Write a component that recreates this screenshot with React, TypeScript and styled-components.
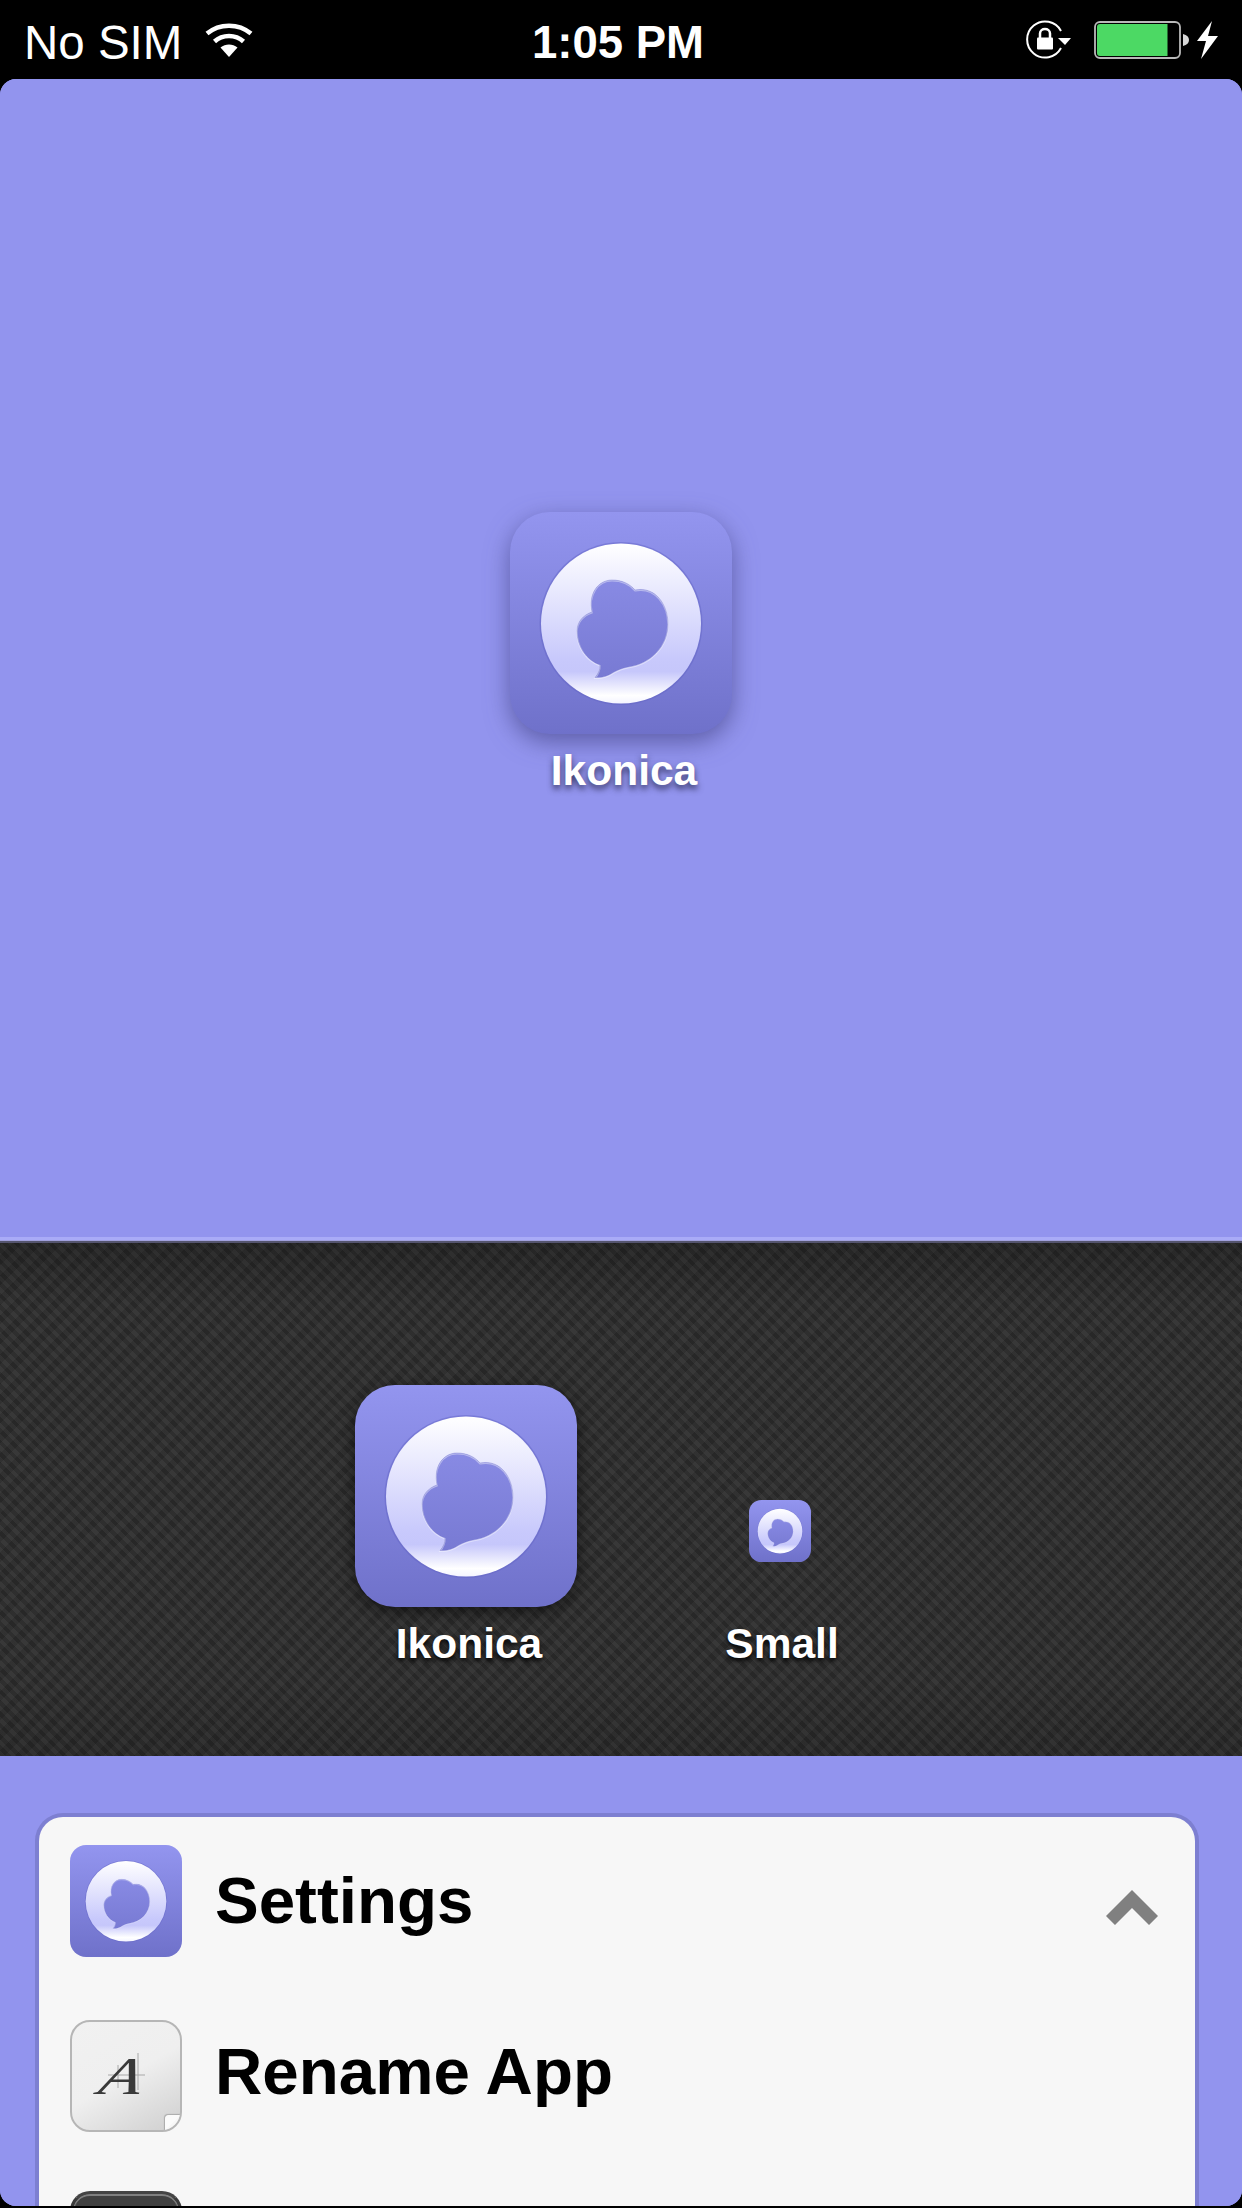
import React, { useId } from "react";
import styled, { createGlobalStyle } from "styled-components";

const Global = createGlobalStyle`
  html, body { margin: 0; padding: 0; background: #000; }
  body { font-family: "Liberation Sans", Arial, sans-serif; }
`;

const Device = styled.div`
  width: 1242px;
  height: 2208px;
  background: #000;
  display: flex;
  flex-direction: column;
  overflow: hidden;
`;

const StatusBar = styled.div`
  height: 79px;
  flex: none;
  display: grid;
  grid-template-columns: 1fr auto 1fr;
  align-items: center;
  color: #fff;
  font-size: 47.5px;
  line-height: 60px;
`;

const StatusLeft = styled.div`
  display: flex;
  align-items: center;
  padding-left: 24px;
  gap: 23px;
`;

const StatusText = styled.span`
  padding-top: 6px;
`;

const StatusTime = styled.div`
  font-weight: 700;
  font-size: 45.5px;
  padding-top: 6px;
  position: relative;
  left: -3px;
`;

const StatusRight = styled.div`
  display: flex;
  align-items: center;
  justify-content: flex-end;
  padding-right: 23px;
  gap: 22px;
`;

const Power = styled.div`
  display: flex;
  align-items: center;
  gap: 8px;
`;

const Screen = styled.div`
  height: 2127px;
  flex: none;
  display: flex;
  flex-direction: column;
  background: #9294ee;
  border-radius: 16px;
  overflow: hidden;
`;

const Stage = styled.div`
  height: 1158px;
  flex: none;
  display: flex;
  justify-content: center;
  padding-top: 433px;
  box-sizing: border-box;
  background: #9294ee;
`;

const Divider = styled.div`
  height: 6px;
  flex: none;
  background: linear-gradient(#a9abf7 0 50%, #a0a0dc 50% 67%, #55556f 67% 100%);
`;

const Shelf = styled.div`
  height: 513px;
  flex: none;
  box-sizing: border-box;
  padding: 142px 0 0 355px;
  display: flex;
  gap: 92px;
  background-color: #2e2e2e;
  background-image:
    linear-gradient(rgba(0, 0, 0, 0.2), rgba(0, 0, 0, 0) 12%, rgba(0, 0, 0, 0) 85%, rgba(0, 0, 0, 0.12)),
    repeating-linear-gradient(45deg, rgba(255, 255, 255, 0.03) 0 4px, rgba(0, 0, 0, 0.07) 4px 8px),
    repeating-linear-gradient(-45deg, rgba(255, 255, 255, 0.02) 0 7px, rgba(0, 0, 0, 0.08) 7px 14px);
`;

const AppItem = styled.div`
  width: 222px;
  display: flex;
  flex-direction: column;
  align-items: center;
`;

const IconSlot = styled.div<{ $pad?: number }>`
  height: 222px;
  width: 222px;
  box-sizing: border-box;
  display: flex;
  align-items: flex-end;
  justify-content: center;
  padding-bottom: ${(p) => p.$pad ?? 0}px;
`;

const IconFrame = styled.div<{ $size: number; $filter?: string }>`
  width: ${(p) => p.$size}px;
  height: ${(p) => p.$size}px;
  flex: none;
  display: flex;
  filter: ${(p) => p.$filter ?? "none"};
  svg { display: block; }
`;

const AppLabel = styled.div<{ $shift?: number; $glow?: boolean }>`
  margin-top: 13px;
  font-weight: 700;
  font-size: 42.5px;
  line-height: 48px;
  color: #fff;
  white-space: nowrap;
  position: relative;
  left: ${(p) => p.$shift ?? 0}px;
  text-shadow: ${(p) =>
    p.$glow ? "0 4px 6px rgba(30, 30, 60, 0.75)" : "0 3px 4px rgba(0, 0, 0, 0.9)"};
`;

const Tray = styled.div`
  flex: 1;
  min-height: 0;
  padding: 57px 43px 0 35px;
  background: #9294ee;
`;

const Card = styled.div`
  height: 500px;
  box-sizing: border-box;
  background: #f7f7f7;
  border: 4px solid #7d7fd1;
  border-bottom: none;
  border-radius: 28px 28px 0 0;
  padding: 28px 0 0 31px;
  display: flex;
  flex-direction: column;
  gap: 63px;
`;

const Row = styled.div<{ $pull?: number }>`
  display: flex;
  align-items: center;
  height: 112px;
  flex: none;
  position: relative;
  margin-top: ${(p) => -(p.$pull ?? 0)}px;
`;

const RowTitle = styled.div<{ $lift: number }>`
  margin-left: 33px;
  font-weight: 700;
  font-size: 65.5px;
  line-height: 76px;
  color: #000;
  position: relative;
  top: ${(p) => -p.$lift}px;
  white-space: nowrap;
`;

const Chevron = styled.svg`
  position: absolute;
  right: 37px;
  top: 45px;
`;

const FontTile = styled.div`
  width: 112px;
  height: 112px;
  flex: none;
  box-sizing: border-box;
  border: 2px solid #b6b6b6;
  border-radius: 20px;
  background: linear-gradient(150deg, #f1f1f1 0%, #efefef 50%, #cfcfcf 100%);
  display: flex;
  align-items: center;
  justify-content: center;
  position: relative;
  overflow: hidden;
`;

const FontGlyph = styled.span`
  font-family: "Liberation Serif", "Times New Roman", serif;
  font-style: italic;
  font-size: 53px;
  line-height: 56px;
  color: #3a3a3a;
  position: relative;
  left: -4px;
  z-index: 1;
  transform: skewX(-14deg) scaleX(1.3);
`;

const FontGuides = styled.svg`
  position: absolute;
  inset: 0;
`;

const PageCurl = styled.div`
  position: absolute;
  right: -1px;
  bottom: -1px;
  width: 16px;
  height: 16px;
  background: linear-gradient(135deg, #fbfbfb 50%, #f7f7f7 50%);
  border-top-left-radius: 4px;
  box-shadow: -1px -1px 1px rgba(0, 0, 0, 0.2);
`;

const DarkTile = styled.div`
  width: 112px;
  height: 112px;
  flex: none;
  box-sizing: border-box;
  border: 3px solid #3a3a3a;
  border-top-color: #444;
  border-radius: 20px;
  background: #404040;
  box-shadow: inset 0 2px 0 #808080, inset 2px 0 0 #5a5a5a, inset -2px 0 0 #5a5a5a;
`;

const BottomRule = styled.div`
  height: 2px;
  flex: none;
  background: #000;
`;

const BUBBLE =
  "M82 100C78 82 88 68 102 68C112 68 120 72 125 78C145 74 158 92 158 112C158 135 140 152 118 155C112 156 108 158 104 160C98 164 92 166 85 165.5C88 162 90 158 90 153C76 148 67 134 67 119C67 110 73 103 82 100Z";

function AppIcon({ size, radius = 40, filter }: { size: number; radius?: number; filter?: string }) {
  const id = useId().replace(/[^a-zA-Z0-9]/g, "");
  return (
    <IconFrame $size={size} $filter={filter}>
      <svg width={size} height={size} viewBox="0 0 222 222">
        <defs>
          <linearGradient id={`${id}bg`} x1="0" y1="0" x2="0" y2="1">
            <stop offset="0" stopColor="#9395ef" />
            <stop offset="1" stopColor="#6f71ca" />
          </linearGradient>
          <linearGradient id={`${id}disc`} x1="0" y1="0" x2="0" y2="1">
            <stop offset="0" stopColor="#ffffff" />
            <stop offset="0.72" stopColor="#c8c9fc" />
            <stop offset="0.8" stopColor="#c6c7fb" />
            <stop offset="0.95" stopColor="#ffffff" />
            <stop offset="1" stopColor="#f4f4ff" />
          </linearGradient>
          <mask id={`${id}hole`}>
            <rect width="222" height="222" fill="#fff" />
            <path d={BUBBLE} fill="#000" />
          </mask>
        </defs>
        <rect width="222" height="222" rx={radius} fill={`url(#${id}bg)`} />
        <g mask={`url(#${id}hole)`}>
          <circle cx="111" cy="111.5" r="81.500" fill="#6466c6" opacity="0.5" />
          <circle cx="111" cy="111.5" r="80" fill={`url(#${id}disc)`} />
        </g>
        <path d={BUBBLE} fill="none" stroke="#ffffff" strokeOpacity="0.4" strokeWidth="1.5" transform="translate(0 0.8)" />
        <path d={BUBBLE} fill="none" stroke="#6a6cc8" strokeOpacity="0.35" strokeWidth="1" />
      </svg>
    </IconFrame>
  );
}

function WifiIcon() {
  return (
    <svg width="48" height="36" viewBox="0 0 48 36">
      <path d="M24 35L15.500 25.500C20.500 21.500 27.500 21.500 32.500 25.500Z" fill="#fff" />
      <path d="M9.500 19.500C17.500 12 30.500 12 38.500 19.500" fill="none" stroke="#fff" strokeWidth="4.500" />
      <path d="M2 11.500C14.500 1 33.500 1 46 11.500" fill="none" stroke="#fff" strokeWidth="4.500" />
    </svg>
  );
}

function RotationLockIcon() {
  return (
    <svg width="46" height="40" viewBox="0 0 46 40">
      <path d="M35 28A18 18 0 1 1 35 11" fill="none" stroke="#fff" strokeWidth="2" />
      <path d="M32 18H45L39 25Z" fill="#fff" />
      <rect x="11" y="17.500" width="16" height="12" fill="#fff" rx="1" />
      <path d="M14 18V13.500C14 7.500 24 7.500 24 13.500V18" fill="none" stroke="#fff" strokeWidth="2.500" />
    </svg>
  );
}

function BatteryIcon() {
  return (
    <svg width="95" height="38" viewBox="0 0 95 38">
      <rect x="1" y="1" width="85" height="36" rx="5" fill="#000" stroke="#b9b9b9" strokeWidth="1.800" />
      <path d="M3 6Q3 3 6 3H73.500V35H6Q3 35 3 32Z" fill="#4cd964" />
      <path d="M89 13C93 14 95 16 95 19C95 22 93 24 89 25Z" fill="#d8d8d8" />
    </svg>
  );
}

function BoltIcon() {
  return (
    <svg width="22" height="38" viewBox="0 0 22 38">
      <path d="M15 0L0 20H9L4 38L21 15H11Z" fill="#fff" />
    </svg>
  );
}

export default function App() {
  return (
    <Device>
      <Global />
      <StatusBar>
        <StatusLeft>
          <StatusText>No SIM</StatusText>
          <WifiIcon />
        </StatusLeft>
        <StatusTime>1:05 PM</StatusTime>
        <StatusRight>
          <RotationLockIcon />
          <Power>
            <BatteryIcon />
            <BoltIcon />
          </Power>
        </StatusRight>
      </StatusBar>
      <Screen>
        <Stage>
          <AppItem>
            <AppIcon size={222} filter="drop-shadow(0 8px 12px rgba(50, 50, 110, 0.55))" />
            <AppLabel $glow $shift={3}>Ikonica</AppLabel>
          </AppItem>
        </Stage>
        <Divider />
        <Shelf>
          <AppItem>
            <IconSlot>
              <AppIcon size={222} filter="drop-shadow(0 4px 8px rgba(0, 0, 0, 0.6))" />
            </IconSlot>
            <AppLabel $shift={3}>Ikonica</AppLabel>
          </AppItem>
          <AppItem>
            <IconSlot $pad={45}>
              <AppIcon size={62} radius={44} filter="blur(0.5px)" />
            </IconSlot>
            <AppLabel $shift={2}>Small</AppLabel>
          </AppItem>
        </Shelf>
        <Tray>
          <Card>
            <Row>
              <AppIcon size={112} radius={32} />
              <RowTitle $lift={0}>Settings</RowTitle>
              <Chevron width="52" height="36" viewBox="0 0 52 36">
                <path d="M0 26L26 0L52 26L43 35L26 18L9 35Z" fill="#808080" />
              </Chevron>
            </Row>
            <Row>
              <FontTile>
                <FontGuides width="108" height="108" viewBox="0 0 108 108">
                  <path d="M36 53H73M66 31V68M46 43V66" stroke="#a8a8a8" strokeWidth="1" fill="none" />
                </FontGuides>
                <FontGlyph>A</FontGlyph>
                <PageCurl />
              </FontTile>
              <RowTitle $lift={4}>Rename App</RowTitle>
            </Row>
            <Row $pull={4}>
              <DarkTile />
            </Row>
          </Card>
        </Tray>
      </Screen>
      <BottomRule />
    </Device>
  );
}
